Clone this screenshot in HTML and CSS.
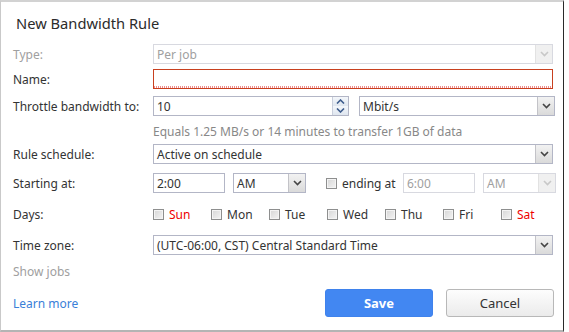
FILE: index.html
```html
<!DOCTYPE html>
<html>
    <head>
        <title>New Bandwidth Rule</title>
        <link rel="stylesheet" href="styles.css">
    </head>
    <body>
        <div class="dialog">
            <h1>New Bandwidth Rule</h1>

            <div class="row row-type">
              <span class="label disabled">Type:</span>
              <div class="select wide disabled"><span class="value">Per job</span><span class="arrow"><svg width="9" height="6" viewBox="0 0 9 6"><path d="M1 1l3.5 3.5L8 1" fill="none" stroke="#c8c8c8" stroke-width="1.6"/></svg></span></div>
            </div>

            <div class="row row-name">
              <span class="label">Name:</span>
              <div class="input wide invalid"></div>
            </div>

            <div class="row row-throttle">
              <span class="label">Throttle bandwidth to:</span>
              <div class="controls">
                <div class="input number"><span class="value">10</span>
                  <span class="spinner">
                    <span class="spin"><svg width="9" height="5" viewBox="0 0 9 5"><path d="M1 4.5l3.5-3.5L8 4.5" fill="none" stroke="#3d5c8c" stroke-width="1.6"/></svg></span>
                    <span class="spin"><svg width="9" height="5" viewBox="0 0 9 5"><path d="M1 0.5l3.5 3.5L8 0.5" fill="none" stroke="#3d5c8c" stroke-width="1.6"/></svg></span>
                  </span>
                </div>
                <div class="select half"><span class="value">Mbit/s</span><span class="arrow"><svg width="9" height="6" viewBox="0 0 9 6"><path d="M1 1l3.5 3.5L8 1" fill="none" stroke="#444" stroke-width="1.6"/></svg></span></div>
              </div>
            </div>

            <div class="row row-hint">
              <span class="label"></span>
              <span class="hint">Equals 1.25 MB/s or 14 minutes to transfer 1GB of data</span>
            </div>

            <div class="row row-schedule">
              <span class="label">Rule schedule:</span>
              <div class="select wide"><span class="value">Active on schedule</span><span class="arrow"><svg width="9" height="6" viewBox="0 0 9 6"><path d="M1 1l3.5 3.5L8 1" fill="none" stroke="#444" stroke-width="1.6"/></svg></span></div>
            </div>

            <div class="row row-start">
              <span class="label">Starting at:</span>
              <div class="controls">
                <div class="input time"><span class="value">2:00</span></div>
                <div class="select ampm"><span class="value">AM</span><span class="arrow"><svg width="9" height="6" viewBox="0 0 9 6"><path d="M1 1l3.5 3.5L8 1" fill="none" stroke="#444" stroke-width="1.6"/></svg></span></div>
                <label class="check ending"><span class="box"></span>ending at</label>
                <div class="input time disabled"><span class="value">6:00</span></div>
                <div class="select ampm disabled"><span class="value">AM</span><span class="arrow"><svg width="9" height="6" viewBox="0 0 9 6"><path d="M1 1l3.5 3.5L8 1" fill="none" stroke="#c8c8c8" stroke-width="1.6"/></svg></span></div>
              </div>
            </div>

            <div class="row row-days">
              <span class="label">Days:</span>
              <div class="days">
                <label class="check weekend"><span class="box"></span>Sun</label>
                <label class="check"><span class="box"></span>Mon</label>
                <label class="check"><span class="box"></span>Tue</label>
                <label class="check"><span class="box"></span>Wed</label>
                <label class="check"><span class="box"></span>Thu</label>
                <label class="check"><span class="box"></span>Fri</label>
                <label class="check weekend"><span class="box"></span>Sat</label>
              </div>
            </div>

            <div class="row row-zone">
              <span class="label">Time zone:</span>
              <div class="select wide"><span class="value">(UTC-06:00, CST) Central Standard Time</span><span class="arrow"><svg width="9" height="6" viewBox="0 0 9 6"><path d="M1 1l3.5 3.5L8 1" fill="none" stroke="#444" stroke-width="1.6"/></svg></span></div>
            </div>

            <div class="row row-jobs">
              <span class="label disabled">Show jobs</span>
            </div>

            <div class="footer">
              <a class="learn" href="#">Learn more</a>
              <div class="buttons">
                <button class="btn save">Save</button>
                <button class="btn cancel">Cancel</button>
              </div>
            </div>
        </div>
    </body>
</html>
```

FILE: styles.css
```css
body {
  margin: 0;
  background: #fff;
  font-family: "Noto Sans", "Liberation Sans", sans-serif;
  font-size: 12px;
  color: #333;
}
.dialog {
  width: 564px;
  height: 332px;
  border-left: 1px solid #c9c9c9;
  border-top: 2px solid #d2d2d2;
  border-right: 1px solid #2a2a2a;
  border-bottom: 2px solid #b4b4b4;
  padding: 0 0 0 12px;
  box-sizing: border-box;
  background: #fff;
}
h1 {
  margin: 0;
  padding: 11px 0 0 3px;
  height: 42px;
  box-sizing: border-box;
  font-size: 14.7px;
  font-weight: normal;
  line-height: 20px;
  color: #2b2b2b;
}
.row {
  display: flex;
  align-items: center;
  height: 20px;
}
.label {
  width: 140px;
  flex: none;
}
.disabled {
  color: #a0a0a0;
}
.row-name { margin-top: 5px; }
.row-throttle { margin-top: 7px; }
.row-hint { height: 28px; }
.row-start { margin-top: 9px; }
.row-days { margin-top: 11px; }
.row-zone { margin-top: 11px; }
.row-jobs { margin-top: 6px; }

.controls {
  display: flex;
  align-items: center;
}
.input, .select {
  height: 20px;
  box-sizing: border-box;
  border: 1px solid #b3b6c6;
  background: #fff;
  display: flex;
  align-items: center;
}
.input.disabled, .select.disabled {
  border-color: #d8d9e0;
}
.value {
  padding-left: 3px;
  white-space: nowrap;
  flex: 1;
}
.wide { width: 400px; }
.half { width: 196px; margin-left: 10px; }
.number { width: 196px; }
.time { width: 72px; }
.ampm { width: 73px; margin-left: 8px; }
.invalid {
  border-color: #c8401f;
  background: repeating-linear-gradient(90deg, #ef8c8c 0 1px, #fff 1px 2px) bottom / 100% 2px no-repeat #fff;
}
.arrow {
  width: 16px;
  height: 100%;
  border-left: 1px solid #c3c3c8;
  background: linear-gradient(#f2f2f2, #dadada);
  display: flex;
  align-items: center;
  justify-content: center;
}
.select.disabled .arrow {
  background: #f0f0f0;
  border-left-color: #e2e2e2;
}
.spinner {
  width: 15px;
  height: 100%;
  display: flex;
  flex-direction: column;
  border-left: 1px solid #c9cfdc;
}
.spin {
  flex: 1;
  display: flex;
  align-items: center;
  justify-content: center;
  background: linear-gradient(#f4f7fb, #dfe6ef);
}
.hint {
  color: #888;
  padding-top: 3px;
}
.check {
  display: flex;
  align-items: center;
  gap: 5px;
}
.box {
  width: 9px;
  height: 9px;
  border: 1px solid #8e8f8f;
  background: linear-gradient(135deg, #d6d6d6, #f4f4f4);
  box-shadow: inset 0 0 0 1px #f4f4f4;
}
.ending {
  width: 77px;
  padding-left: 20px;
  flex: none;
  font-size: 12px;
}
.days {
  display: grid;
  grid-template-columns: repeat(7, 58px);
}
.weekend {
  color: #e00;
}
.footer {
  display: flex;
  align-items: center;
  justify-content: space-between;
  width: 541px;
  margin-top: 8px;
}
.learn {
  color: #3a80d8;
  text-decoration: none;
}
.buttons {
  display: flex;
  gap: 13px;
}
.btn {
  width: 108px;
  height: 28px;
  border-radius: 3px;
  font-family: "Noto Sans", "Liberation Sans", sans-serif;
  font-size: 13px;
  cursor: pointer;
}
.save {
  background: #4287f2;
  border: 1px solid #3f82ec;
  color: #fff;
  font-weight: bold;
}
.cancel {
  background: linear-gradient(#fdfdfd, #ebebeb);
  border: 1px solid #b8b8b8;
  color: #333;
}
```
